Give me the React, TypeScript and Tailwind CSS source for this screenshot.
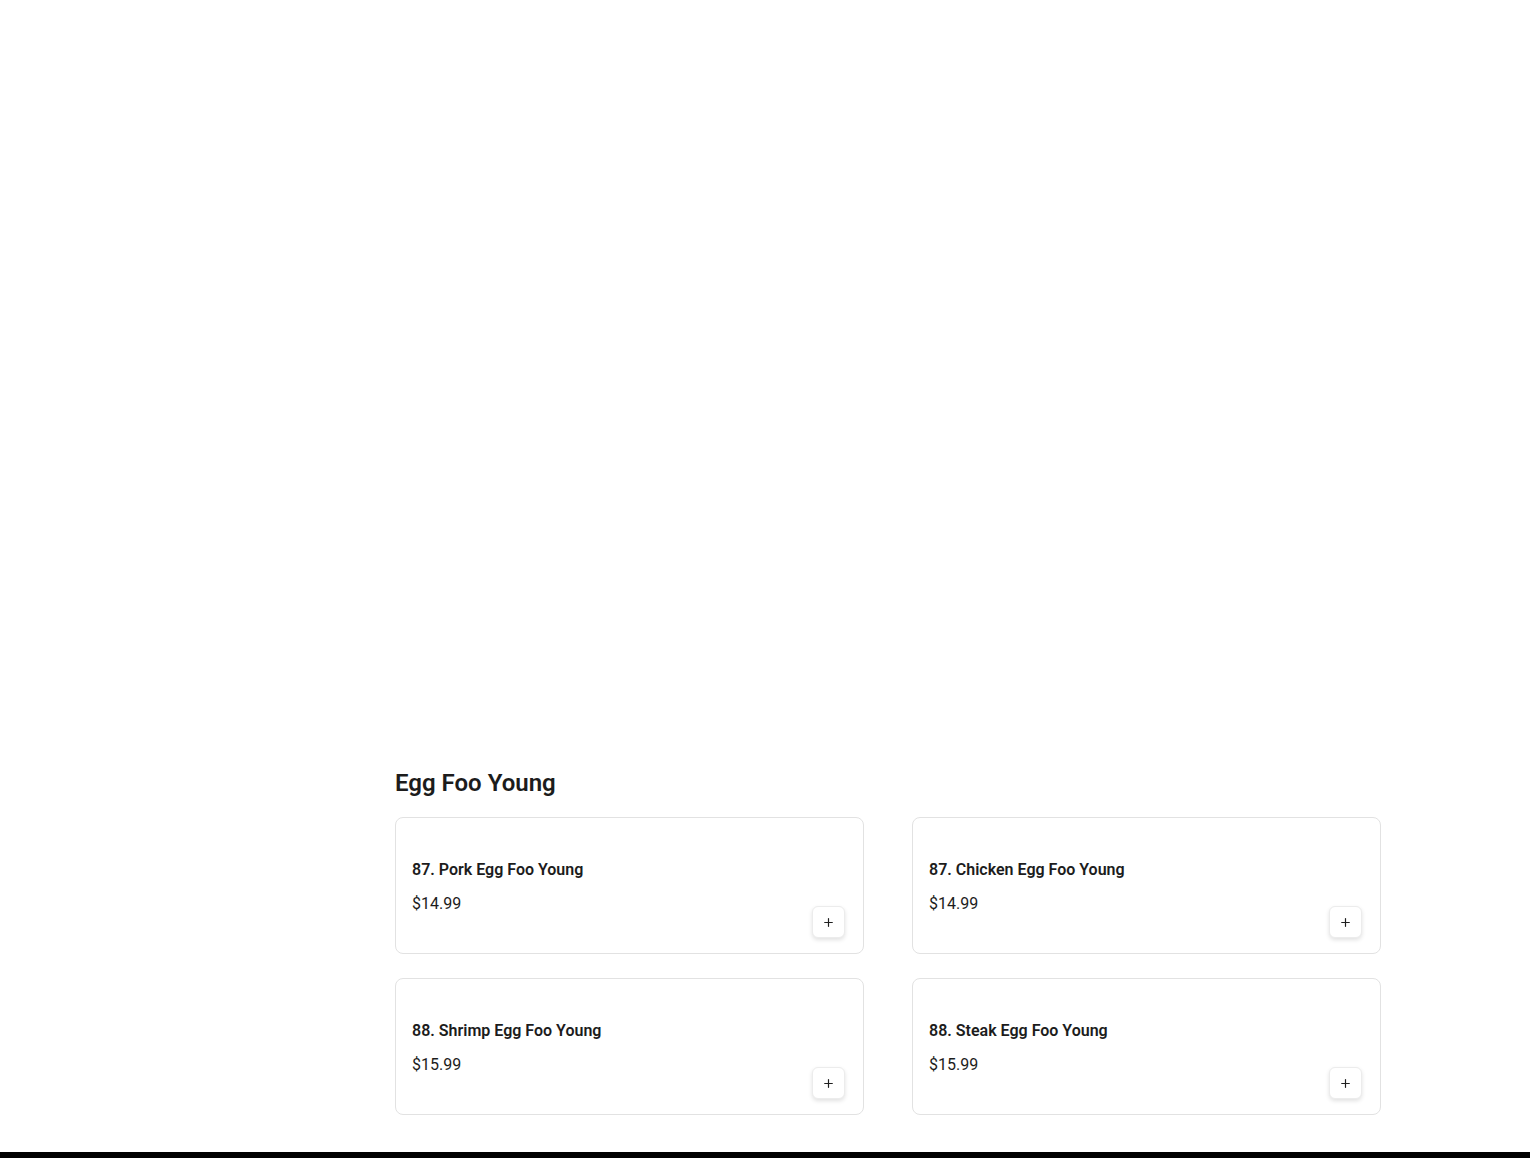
import React from "react";
import { Plus } from "lucide-react";

interface MenuItem {
  id: string;
  name: string;
  price: string;
}

const items: MenuItem[] = [
  { id: "87a", name: "87. Pork Egg Foo Young", price: "$14.99" },
  { id: "87b", name: "87. Chicken Egg Foo Young", price: "$14.99" },
  { id: "88a", name: "88. Shrimp Egg Foo Young", price: "$15.99" },
  { id: "88b", name: "88. Steak Egg Foo Young", price: "$15.99" },
];

const MenuCard: React.FC<{ item: MenuItem }> = ({ item }) => (
  <div className="flex flex-col rounded-lg border border-[#e2e2e2] bg-white px-4 pt-[40px] pb-[15px]">
    <h3 className="text-base leading-6 font-semibold text-[#1c1c1c]">{item.name}</h3>
    <div className="mt-[10px] flex items-start justify-between">
      <span className="text-base leading-6 text-[#1c1c1c]">{item.price}</span>
      <button
        type="button"
        className="mt-[14px] mr-[2px] flex h-8 w-[33px] items-center justify-center rounded-md border border-[#ececec] bg-white text-[#1f1f1f] shadow-[0_2px_4px_rgba(0,0,0,0.12)]"
      >
        <Plus size={13} strokeWidth={2.2} />
      </button>
    </div>
  </div>
);

export default function App() {
  return (
    <div className="min-h-screen bg-white font-['Roboto',sans-serif]">
      <section className="pl-[395px] pt-[767px] pb-[37px]">
        <div className="w-[986px]">
          <h2 className="mb-[18px] text-2xl leading-8 font-semibold text-[#1c1c1c]">Egg Foo Young</h2>
          <div className="grid grid-cols-2 gap-x-12 gap-y-6">
            {items.map((item) => (
              <MenuCard key={item.id} item={item} />
            ))}
          </div>
        </div>
      </section>
      <footer className="h-40 bg-black" />
    </div>
  );
}
